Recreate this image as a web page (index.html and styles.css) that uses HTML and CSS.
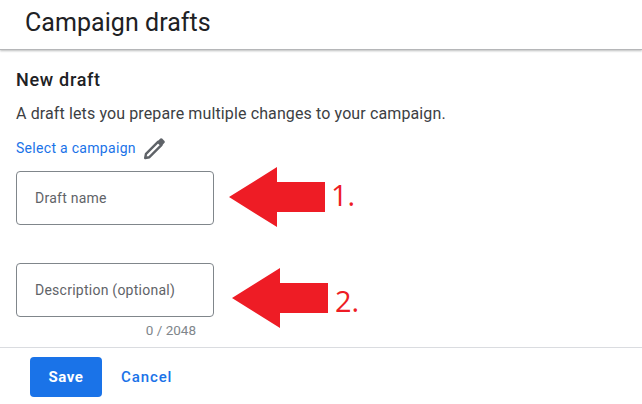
FILE: index.html
```html
<!DOCTYPE html>
<html lang="en">
<head>
  <meta charset="UTF-8" />
  <title>Campaign drafts</title>
  <link rel="stylesheet" href="styles.css">
</head>
<body>
  <div class="page">
    <header class="page-header">
      <h1>Campaign drafts</h1>
    </header>

    <main class="draft-form">
      <h2>New draft</h2>
      <p class="intro">A draft lets you prepare multiple changes to your campaign.</p>
      <div class="campaign-select">
        <a class="link">Select a campaign</a>
        <svg class="pencil" width="24" height="24" viewBox="0 0 24 24">
          <path d="M3.2 21 L4 16.8 L16 4.8 L19.4 8.2 L7.4 20.2 Z" fill="none" stroke="#5f6368" stroke-width="2.4" stroke-linejoin="round" />
          <path d="M15.4 4.4 L18.4 1.6 Q19.4 0.9 20.3 1.7 L22.5 3.9 Q23.2 4.8 22.5 5.7 L19.8 8.7 Z" fill="#5f6368" />
        </svg>
      </div>
      <div class="field field-name">Draft name</div>
      <div class="field field-desc">Description (optional)</div>
      <div class="counter">0 / 2048</div>
    </main>

    <footer class="actions">
      <button class="save">Save</button>
      <a class="cancel">Cancel</a>
    </footer>

    <!-- annotations on top of the screenshot -->
    <svg class="arrow arrow-one" width="98" height="62" viewBox="0 0 98 62">
      <path d="M0 30 L48 0 L48 15 L96 15 L96 45 L48 45 L48 60 Z" fill="#ee1c25" />
    </svg>
    <span class="step step-one">1.</span>
    <svg class="arrow arrow-two" width="98" height="62" viewBox="0 0 98 62">
      <path d="M0 30 L48 0 L48 15 L96 15 L96 45 L48 45 L48 60 Z" fill="#ee1c25" />
    </svg>
    <span class="step step-two">2.</span>
  </div>
</body>
</html>
```

FILE: styles.css
```css
* {
  box-sizing: border-box;
}

body {
  margin: 0;
  font-family: Roboto, Arial, sans-serif;
  background: white;
  color: #202124;
}

.page {
  position: relative;
  width: 642px;
  height: 404px;
  overflow: hidden;
}

.page-header {
  height: 50px;
  padding-left: 25px;
  border-bottom: 1px solid #b5b6b8;
  box-shadow: 0 1px 2px rgba(60, 64, 67, 0.35);
}

.page-header h1 {
  margin: 0;
  font-size: 25px;
  font-weight: 400;
  line-height: 46px;
  letter-spacing: 0.05px;
}

.draft-form {
  height: 298px;
  padding: 20px 0 0 16px;
  border-bottom: 1px solid #dadce0;
}

.draft-form h2 {
  margin: 0;
  font-size: 18px;
  font-weight: 500;
  line-height: 20px;
  letter-spacing: 0.7px;
}

.intro {
  margin: 14px 0 0;
  font-size: 16px;
  line-height: 20px;
  color: #3c4043;
  letter-spacing: 0.12px;
}

.campaign-select {
  display: flex;
  align-items: center;
  gap: 6px;
  height: 24px;
  margin-top: 12px;
}

.link {
  font-size: 14px;
  color: #1a73e8;
  letter-spacing: 0.3px;
}

.pencil {
  margin-top: 1px;
}

.field {
  width: 198px;
  height: 54px;
  padding-left: 18px;
  border: 1px solid #80868b;
  border-radius: 4px;
  font-size: 14px;
  line-height: 52px;
  letter-spacing: 0.25px;
  color: #5f6368;
}

.field-name {
  margin-top: 11px;
}

.field-desc {
  margin-top: 38px;
}

.counter {
  width: 180px;
  margin-top: 5px;
  text-align: right;
  font-size: 13.5px;
  line-height: 16px;
  color: #80868b;
}

.actions {
  display: flex;
  align-items: center;
  gap: 19px;
  padding: 9px 0 0 30px;
}

.save {
  width: 72px;
  height: 40px;
  border: none;
  border-radius: 4px;
  background: #1a73e8;
  color: white;
  font-family: inherit;
  font-size: 15px;
  font-weight: 700;
  letter-spacing: 0.5px;
}

.cancel {
  font-size: 15px;
  font-weight: 500;
  letter-spacing: 0.9px;
  color: #1a73e8;
}

.arrow {
  position: absolute;
}

.arrow-one {
  left: 229px;
  top: 167px;
}

.arrow-two {
  left: 232px;
  top: 268px;
}

.step {
  position: absolute;
  font-family: "Open Sans", sans-serif;
  font-size: 29px;
  line-height: 34px;
  color: #ee1c25;
}

.step-one {
  left: 331px;
  top: 178px;
}

.step-two {
  left: 335px;
  top: 284px;
}
```
